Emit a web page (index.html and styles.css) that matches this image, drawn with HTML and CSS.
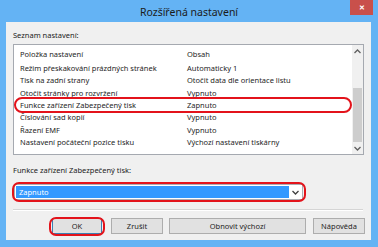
FILE: index.html
```html
<!DOCTYPE html>
<html lang="cs">
<head>
  <meta charset="UTF-8" />
  <title>Rozšířená nastavení</title>
  <link rel="stylesheet" href="styles.css">
</head>
<body>
  <div class="window">
    <div class="titlebar">
      <span class="title">Rozšířená nastavení</span>
      <div class="close">&#x2715;</div>
    </div>

    <div class="client">
      <div class="label">Seznam nastavení:</div>

      <div class="listbox">
        <div class="list">
          <div class="row header"><span class="c1">Položka nastavení</span><span class="c2">Obsah</span></div>
          <div class="row"><span class="c1">Režim přeskakování prázdných stránek</span><span class="c2">Automaticky 1</span></div>
          <div class="row"><span class="c1">Tisk na zadní strany</span><span class="c2">Otočit data dle orientace listu</span></div>
          <div class="row"><span class="c1">Otočit stránky pro rozvržení</span><span class="c2">Vypnuto</span></div>
          <div class="row marked"><span class="c1">Funkce zařízení Zabezpečený tisk</span><span class="c2">Zapnuto</span></div>
          <div class="row"><span class="c1">Číslování sad kopií</span><span class="c2">Vypnuto</span></div>
          <div class="row"><span class="c1">Řazení EMF</span><span class="c2">Vypnuto</span></div>
          <div class="row"><span class="c1">Nastavení počáteční pozice tisku</span><span class="c2">Výchozí nastavení tiskárny</span></div>
        </div>
        <div class="scrollbar">
          <div class="arrow">
            <svg width="7" height="5" viewBox="0 0 7 5"><path d="M0.5 4 L3.5 1 L6.5 4" fill="none" stroke="#606060" stroke-width="1.3"/></svg>
          </div>
          <div class="track"><div class="thumb"></div></div>
          <div class="arrow">
            <svg width="7" height="5" viewBox="0 0 7 5"><path d="M0.5 1 L3.5 4 L6.5 1" fill="none" stroke="#606060" stroke-width="1.3"/></svg>
          </div>
        </div>
      </div>

      <div class="label second">Funkce zařízení Zabezpečený tisk:</div>

      <div class="combo marked-box">
        <div class="combo-value">Zapnuto</div>
        <div class="combo-arrow">
          <svg width="7" height="5" viewBox="0 0 7 5"><path d="M0.5 1 L3.5 4 L6.5 1" fill="none" stroke="#404040" stroke-width="1.3"/></svg>
        </div>
      </div>

      <div class="separator"></div>

      <div class="buttons">
        <button class="btn ok">OK</button>
        <button class="btn cancel">Zrušit</button>
        <button class="btn reset">Obnovit výchozí</button>
        <button class="btn help">Nápověda</button>
      </div>
    </div>
  </div>
</body>
</html>
```

FILE: styles.css
```css
body {
  margin: 0;
  padding: 0;
  background: #64b3f4;
  font-family: 'Noto Sans', 'Liberation Sans', sans-serif;
  color: #1e1e1e;
}

.window {
  width: 378px;
  height: 247px;
  overflow: hidden;
}

.titlebar {
  position: relative;
  height: 22px;
  display: flex;
  align-items: center;
  justify-content: center;
}

.title {
  font-size: 10.5px;
  color: #1b1b1b;
  margin-top: 2px;
}

.close {
  position: absolute;
  top: 0;
  right: 5px;
  width: 23px;
  height: 15px;
  background: #c9504b;
  color: #fff;
  font-size: 7px;
  font-weight: bold;
  display: flex;
  align-items: center;
  justify-content: center;
}

.client {
  margin-left: 6px;
  width: 365px;
  height: 218px;
  background: #f0f0f0;
  box-sizing: border-box;
  padding: 8px 0 0 7px;
  display: flex;
  flex-direction: column;
}

.label {
  font-size: 7.5px;
  line-height: 10px;
  color: #222;
}

.label.second {
  margin-top: 10px;
}

.listbox {
  margin-top: 4px;
  width: 351px;
  height: 111px;
  box-sizing: border-box;
  border: 1px solid #a5a9b0;
  background: #fff;
  display: flex;
}

.list {
  flex: 1;
}

.row {
  position: relative;
  display: flex;
  height: 12.3px;
  align-items: center;
  font-size: 7.5px;
  padding-left: 6px;
}

.row.header {
  height: 17px;
}

.c1 {
  width: 167px;
}

/* red marker round the highlighted row */
.row.marked::after {
  content: '';
  position: absolute;
  left: 0;
  right: 0;
  top: -2px;
  bottom: -2px;
  border: 2px solid #e3131b;
  border-radius: 8px;
}

.scrollbar {
  width: 11px;
  background: #f0f0f0;
  display: flex;
  flex-direction: column;
}

.arrow {
  height: 12px;
  display: flex;
  align-items: center;
  justify-content: center;
}

.track {
  flex: 1;
  display: flex;
  flex-direction: column;
  justify-content: flex-end;
}

.thumb {
  height: 54px;
  margin: 0 1px;
  background: #cdcdcd;
}

.combo {
  position: relative;
  margin-top: 9px;
  width: 289px;
  height: 16px;
  margin-left: 1px;
  box-sizing: border-box;
  border: 1px solid #abadb3;
  background: #fff;
  padding: 1px;
  display: flex;
}

.combo.marked-box::after {
  content: '';
  position: absolute;
  left: -3px;
  right: -4px;
  top: -3px;
  bottom: -3px;
  border: 2px solid #e3131b;
  border-radius: 7px;
}

.combo-value {
  flex: 1;
  background: #3399ff;
  color: #fff;
  font-size: 7.5px;
  display: flex;
  align-items: center;
  padding-left: 3px;
}

.combo-arrow {
  width: 12px;
  display: flex;
  align-items: center;
  justify-content: center;
}

.separator {
  margin-top: 9px;
  width: 350px;
  height: 1px;
  background: #d5d5d5;
  border-bottom: 1px solid #fff;
}

.buttons {
  margin-top: 7px;
  display: flex;
}

.btn {
  height: 16px;
  padding: 0;
  margin: 0;
  border: 1px solid #adadad;
  background: #e1e1e1;
  font-family: 'Noto Sans', 'Liberation Sans', sans-serif;
  font-size: 7.5px;
  color: #1e1e1e;
}

.btn.ok {
  position: relative;
  margin-left: 39px;
  width: 50px;
  border-color: #3c7fb1;
}

.btn.ok::after {
  content: '';
  position: absolute;
  left: -4px;
  right: -4px;
  top: -2px;
  bottom: -3px;
  border: 2px solid #e3131b;
  border-radius: 7px;
}

.btn.cancel {
  margin-left: 9px;
  width: 52px;
}

.btn.reset {
  margin-left: 6px;
  width: 137px;
}

.btn.help {
  margin-left: 7px;
  width: 52px;
}
```
